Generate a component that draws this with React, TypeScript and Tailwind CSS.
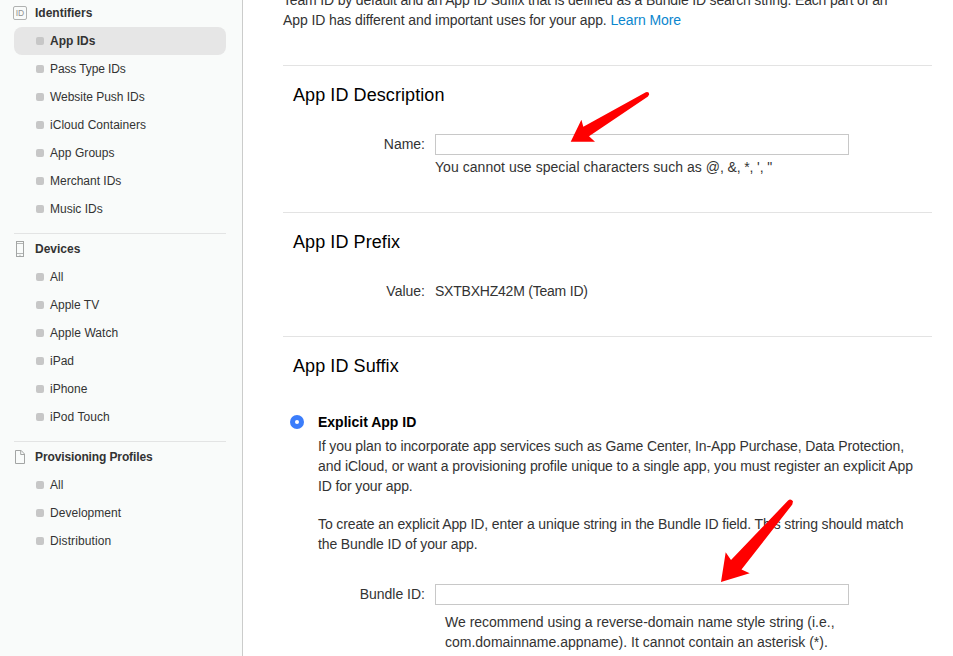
import type { ReactNode } from "react";

type Item = { label: string; active?: boolean; tracking?: string };
type Group = { title: string; tracking?: string; icon: ReactNode; items: Item[] };

const IdIcon = () => (
  <span className="flex size-[14px] items-center justify-center rounded-[2px] border border-[#b0b2b1] text-[8.5px] leading-none font-normal text-[#8f9190]">
    ID
  </span>
);

const DeviceIcon = () => (
  <svg width="14" height="16" viewBox="0 0 14 16" fill="none" stroke="#a3a5a4">
    <rect x="3.5" y="0.5" width="7" height="15" />
    <path d="M4 2.5h6M4 12.5h6" stroke="#b4b6b5" />
    <path d="M6 14.3h2" strokeWidth="0.8" stroke="#c0c2c1" />
  </svg>
);

const FileIcon = () => (
  <svg width="14" height="14" viewBox="0 0 14 14" fill="none" stroke="#a3a5a4">
    <path d="M2.5 0.5h5.7l3.3 3.5v9.5h-9zM7.7 0.5v4h3.8" />
  </svg>
);

const groups: Group[] = [
  {
    title: "Identifiers",
    icon: <IdIcon />,
    items: [
      { label: "App IDs", active: true },
      { label: "Pass Type IDs", tracking: "tracking-[-0.11px]" },
      { label: "Website Push IDs", tracking: "tracking-[-0.03px]" },
      { label: "iCloud Containers", tracking: "tracking-[0.04px]" },
      { label: "App Groups", tracking: "tracking-[0.06px]" },
      { label: "Merchant IDs" },
      { label: "Music IDs" },
    ],
  },
  {
    title: "Devices",
    icon: <DeviceIcon />,
    items: [
      { label: "All" },
      { label: "Apple TV" },
      { label: "Apple Watch", tracking: "tracking-[0.06px]" },
      { label: "iPad" },
      { label: "iPhone" },
      { label: "iPod Touch", tracking: "tracking-[0.06px]" },
    ],
  },
  {
    title: "Provisioning Profiles",
    tracking: "tracking-[-0.12px]",
    icon: <FileIcon />,
    items: [
      { label: "All" },
      { label: "Development", tracking: "tracking-[0.04px]" },
      { label: "Distribution", tracking: "tracking-[0.1px]" },
    ],
  },
];

function Sidebar() {
  return (
    <nav className="h-full w-[243px] shrink-0 border-r border-[#cbcccb] bg-[#f9fbfa] text-[12px] text-[#333]">
      {groups.map((group, i) => (
        <div key={group.title} className={i === 0 ? "-mt-px" : "mt-[10px]"}>
          {i > 0 && <div className="mr-4 ml-[14px] mb-px h-px bg-[#e3e4e4]" />}
          <h3 className="flex h-7 items-center pl-[13px] font-bold">
            {group.icon}
            <span className={`ml-2 ${group.tracking ?? ""}`}>{group.title}</span>
          </h3>
          <ul>
            {group.items.map((item) => (
              <li
                key={item.label}
                className={
                  item.active
                    ? "mr-4 ml-[14px] flex h-7 items-center rounded-lg bg-[#e6e6e6] pl-[22px] font-bold"
                    : "mr-4 ml-[14px] flex h-7 items-center pl-[22px]"
                }
              >
                <span className="mr-[6px] size-2 rounded-[2px] bg-[#c7c7c7]" />
                <span className={item.tracking}>{item.label}</span>
              </li>
            ))}
          </ul>
        </div>
      ))}
    </nav>
  );
}

function Section({ title, className, children }: { title: string; className: string; children: ReactNode }) {
  return (
    <section className={`border-t border-[#e3e3e3] pt-[17px] ${className}`}>
      <h2 className="pl-[10px] text-[18px] leading-6 tracking-[0.08px] text-black">{title}</h2>
      {children}
    </section>
  );
}

function Field({ label, children }: { label: string; children: ReactNode }) {
  return (
    <div className="flex h-[21px] items-start">
      <span className="w-[142px] text-right">{label}</span>
      <div className="ml-[10px] flex">{children}</div>
    </div>
  );
}

const inputClass = "h-[21px] w-[414px] border border-[#c8c8c8] bg-white outline-none";

export default function App() {
  return (
    <div className="relative flex h-[656px] w-[953px] overflow-hidden bg-white font-['Liberation_Sans',Arial,sans-serif]">
      <Sidebar />
      <main className="ml-10 w-[649px] text-[14px] leading-5 whitespace-nowrap text-[#333]">
        <div className="-mt-[10px] h-[75px]">
          <p className="tracking-[-0.17px]">
            Team ID by default and an App ID Suffix that is defined as a Bundle ID search string. Each part of an
          </p>
          <p className="tracking-[-0.1px]">
            App ID has different and important uses for your app. <a className="text-[#0a86ce]">Learn More</a>
          </p>
        </div>

        <Section title="App ID Description" className="h-[147px]">
          <div className="mt-[27px]">
            <Field label="Name:">
              <input className={inputClass} />
            </Field>
            <p className="mt-[2px] pl-[152px]">
              <span className="tracking-[0.05px]">You cannot use special characters such as </span>
              <span className="tracking-[-0.12px]">@, &amp;, *, &#39;, &quot;</span>
            </p>
          </div>
        </Section>

        <Section title="App ID Prefix" className="h-[124px]">
          <div className="mt-[27px]">
            <Field label="Value:">
              <span className="tracking-[-0.22px]">SXTBXHZ42M (Team ID)</span>
            </Field>
          </div>
        </Section>

        <Section title="App ID Suffix" className="h-[320px]">
          <div className="mt-[34px] flex">
            <span className="mt-[3px] ml-[7px] flex size-[14px] items-center justify-center rounded-full bg-[#3b7dfb]">
              <span className="size-1 rounded-full bg-white" />
            </span>
            <div className="ml-[14px]">
              <h4 className="font-bold text-black">Explicit App ID</h4>
              <div className="mt-1">
                <p className="tracking-[-0.108px]">
                  If you plan to incorporate app services such as Game Center, In-App Purchase, Data Protection,
                </p>
                <p className="tracking-[-0.083px]">
                  and iCloud, or want a provisioning profile unique to a single app, you must register an explicit App
                </p>
                <p className="tracking-[-0.12px]">ID for your app.</p>
              </div>
              <div className="mt-[18px] tracking-[-0.12px]">
                <p>To create an explicit App ID, enter a unique string in the Bundle ID field. This string should match</p>
                <p>the Bundle ID of your app.</p>
              </div>
            </div>
          </div>
          <div className="mt-[30px]">
            <Field label="Bundle ID:">
              <input className={inputClass} />
            </Field>
            <div className="mt-[7px] pl-[162px]">
              <p>We recommend using a reverse-domain name style string (i.e.,</p>
              <p>com.domainname.appname). It cannot contain an asterisk (*).</p>
            </div>
          </div>
        </Section>
      </main>

      <svg className="pointer-events-none absolute top-0 left-0" width="953" height="656" fill="#ff0000">
        <path d="M570.7 141.8 581.4 119.8 583.3 126.8 645.8 92.2Q649 91.3 649.2 94.3L648 96.5 589 136.2 595 141.8Z" />
        <path d="M721 582 725.7 552.2 731 560 787.8 500.8Q790.5 498.2 793 501.2L792.3 504.5 741.5 569.5 749.7 573.2Z" />
      </svg>
    </div>
  );
}
